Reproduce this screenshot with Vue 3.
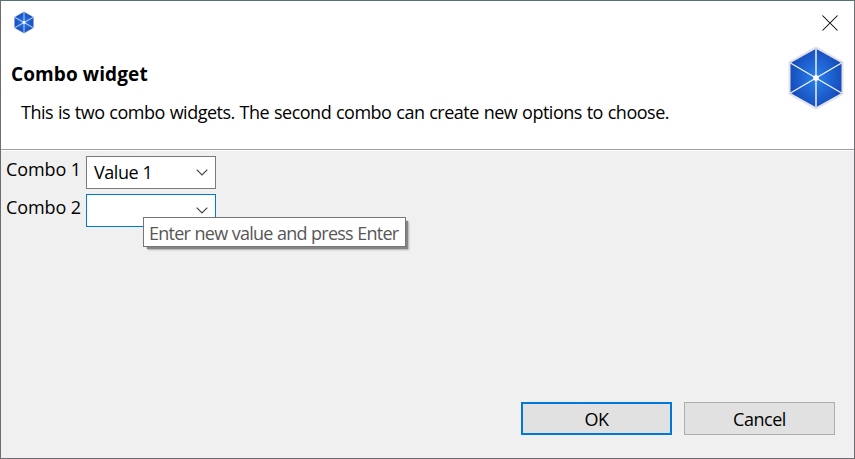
<script setup>
import { ref } from 'vue'

const title = 'Combo widget'
const description = 'This is two combo widgets. The second combo can create new options to choose.'
const combos = ref([
  { label: 'Combo 1', value: 'Value 1', active: false },
  { label: 'Combo 2', value: '', active: true },
])
const hint = 'Enter new value and press Enter'
</script>

<template>
  <div class="dialog">
    <header class="banner">
      <div class="titlebar">
        <svg class="app-icon" viewBox="0 0 56 62">
          <defs>
            <radialGradient id="facetSmall">
              <stop offset="0" stop-color="#2878e8" />
              <stop offset="1" stop-color="#1750bd" />
            </radialGradient>
          </defs>
          <path d="M28 1 55 16V46L28 61 1 46V16Z" fill="#b9c9e8" />
          <path d="M28 3 53 17V45L28 59 3 45V17Z" fill="url(#facetSmall)" />
          <path d="M28 3V59M3 17 53 45M53 17 3 45" stroke="#a9c6f3" stroke-width="3" />
          <circle cx="28" cy="31" r="4" fill="#fff" />
        </svg>
        <svg class="close" viewBox="0 0 16 16">
          <path d="M.5 .5 15.5 15.5M15.5 .5 .5 15.5" stroke="#000" stroke-width="1.05" />
        </svg>
      </div>
      <div class="heading">
        <div>
          <h1><span>{{ title }}</span></h1>
          <p><span>{{ description }}</span></p>
        </div>
        <svg class="logo" viewBox="0 0 56 64">
          <defs>
            <radialGradient id="facetLarge">
              <stop offset="0" stop-color="#2a80ee" />
              <stop offset="1" stop-color="#164fbd" />
            </radialGradient>
          </defs>
          <path d="M28 .2 55.5 15.5V48.5L28 63.8 .5 48.5V15.5Z" fill="#e4e4e8" />
          <path d="M28 2.8 53.5 17V47L28 61.2 2.5 47V17Z" fill="url(#facetLarge)" />
          <path d="M28 2V62" stroke="#c3d2f3" stroke-width="1.9" />
          <path d="M2.5 17 53.5 47M53.5 17 2.5 47" stroke="#eef3fc" stroke-width="1.4" />
          <rect x="25.3" y="29.3" width="5.4" height="5.4" rx="1.8" fill="#fff" />
        </svg>
      </div>
    </header>

    <main class="form">
      <div v-for="combo in combos" :key="combo.label" class="row">
        <label><span>{{ combo.label }}</span></label>
        <div class="combo" :class="{ active: combo.active }">
          <span class="value">{{ combo.value }}</span>
          <svg class="chevron" viewBox="0 0 12 7">
            <path d="M.7 .7 6 6 11.3 .7" fill="none" stroke="#444" stroke-width="1.2" />
          </svg>
        </div>
      </div>
      <div class="tooltip"><span>{{ hint }}</span></div>
    </main>

    <footer class="actions">
      <button class="default"><span>OK</span></button>
      <button><span>Cancel</span></button>
    </footer>
  </div>
</template>

<style>
body {
  margin: 0;
  overflow: hidden;
}
</style>

<style scoped>
.dialog {
  box-sizing: border-box;
  position: relative;
  display: flex;
  flex-direction: column;
  width: 855px;
  height: 459px;
  border: 1px solid #6e6c6e;
  border-top-color: #557373;
  background: #f0f0f0;
  color: #000;
  font: 400 18px/24px "Open Sans", "Noto Sans", sans-serif;
  letter-spacing: -0.45px;
  white-space: nowrap;
}
.banner {
  box-sizing: border-box;
  height: 149px;
  background: #fff;
  border-bottom: 1px solid #a0a0a0;
  box-shadow: 0 1px #fff;
}
.titlebar {
  display: flex;
  justify-content: space-between;
  align-items: flex-start;
  height: 45px;
  padding: 0 16.5px 0 12px;
  box-sizing: border-box;
}
.app-icon {
  width: 22px;
  height: 23px;
  margin-top: 9.5px;
}
.close {
  width: 16px;
  height: 16px;
  margin-top: 13.5px;
}
.heading {
  display: flex;
  justify-content: space-between;
  padding: 0 10px;
}
h1 {
  margin: 16px 0 0;
  font-size: 19px;
  line-height: 24px;
  font-weight: 700;
  letter-spacing: 0.1px;
}
p {
  margin: 14px 0 0 10px;
  letter-spacing: -0.5px;
  word-spacing: 0.65px;
}
.logo {
  width: 56px;
  height: 64px;
}
.form {
  display: flex;
  flex-direction: column;
  gap: 5px;
  padding: 6px 5px 0;
}
.row {
  display: flex;
}
label {
  width: 80px;
  padding-top: 1px;
  letter-spacing: -0.1px;
}
.combo {
  box-sizing: border-box;
  display: flex;
  align-items: center;
  justify-content: space-between;
  width: 130px;
  height: 33px;
  padding: 0 7px;
  border: 1px solid #7a7a7a;
  background: #fff;
}
.combo.active {
  border-color: #0078d7;
}
.value {
  padding-bottom: 2px;
}
.chevron {
  width: 12px;
  height: 7px;
}
.tooltip {
  position: absolute;
  left: 142px;
  top: 216px;
  box-sizing: border-box;
  width: 263px;
  height: 30px;
  padding: 3px 5px 0;
  border: 1px solid #767676;
  background: #fff;
  color: #575757;
  letter-spacing: -0.75px;
  word-spacing: 0.4px;
  box-shadow: 3px 3px 1px -1px #858585, 4px 4px 2px -1px #bbb;
}
.actions {
  display: flex;
  justify-content: flex-end;
  gap: 12px;
  margin-top: auto;
  padding: 0 19px 23px 0;
}
button {
  box-sizing: border-box;
  width: 151px;
  height: 33px;
  padding: 0;
  border: 1px solid #adadad;
  background: #e1e1e1;
  color: #000;
  font: inherit;
  letter-spacing: inherit;
}
button.default {
  border: 2px solid #0078d7;
}
</style>
